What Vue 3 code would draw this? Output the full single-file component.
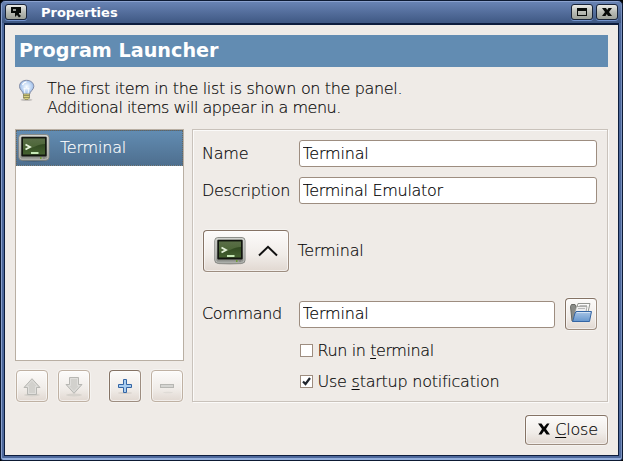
<script setup>
import { ref } from 'vue'

const name = ref('Terminal')
const description = ref('Terminal Emulator')
const command = ref('Terminal')
const runInTerminal = ref(false)
const startupNotification = ref(true)
</script>

<template>
  <svg class="defs" width="0" height="0">
    <defs>
      <linearGradient id="bezel" x1="0" y1="0" x2="0" y2="1">
        <stop offset="0" stop-color="#c9cbc6" /><stop offset=".6" stop-color="#a9aba6" /><stop offset="1" stop-color="#888a85" />
      </linearGradient>
      <linearGradient id="screen" x1="0" y1="0" x2="0" y2="1">
        <stop offset="0" stop-color="#263b18" /><stop offset="1" stop-color="#456231" />
      </linearGradient>
      <linearGradient id="shine" x1="0" y1="0" x2="0" y2="1">
        <stop offset="0" stop-color="#85986f" /><stop offset="1" stop-color="#536f3a" />
      </linearGradient>
      <linearGradient id="folder" x1="0" y1="0" x2="0" y2="1">
        <stop offset="0" stop-color="#a8c5e6" /><stop offset="1" stop-color="#6696cd" />
      </linearGradient>
      <radialGradient id="bulb" cx=".5" cy=".45" r=".55">
        <stop offset="0" stop-color="#f8fcff" /><stop offset=".55" stop-color="#c2d8f4" /><stop offset="1" stop-color="#92b4e4" />
      </radialGradient>
      <symbol id="term" viewBox="0 0 32 28">
        <ellipse cx="16" cy="26.2" rx="13" ry="1.6" fill="#000" opacity=".2" />
        <rect x=".8" y=".6" width="30.2" height="25.6" rx="3" fill="url(#bezel)" stroke="#858782" />
        <rect x="1.8" y="1.6" width="28.2" height="23.6" rx="2" fill="none" stroke="#e0e1dd" stroke-opacity=".6" />
        <rect x="3.3" y="2.8" width="25.4" height="19.7" rx="1" fill="#12160f" />
        <rect x="5" y="4.5" width="22" height="16" fill="url(#screen)" />
        <path d="M5 4.5H27V10C19 10 16 15 5 15.5Z" fill="url(#shine)" opacity=".55" />
        <path d="M7.5 10.500L12 13L7.5 15.500" fill="none" stroke="#e6f3dc" stroke-width="1.8" />
        <path d="M13 19H20.5" stroke="#c6e8b6" stroke-width="2" />
        <path d="M22 24H23.5" stroke="#719c36" stroke-width="2" />
        <path d="M25 24H27" stroke="#777" stroke-width="1" />
      </symbol>
    </defs>
  </svg>
  <div class="window">
    <header class="titlebar">
      <button class="wm">
        <svg width="20" height="14" viewBox="0 0 20 14"><path d="M5 2H15V8H13V9L15 11L13 12.500L11 10L9 12V8H5Z" fill="#070b08" /><path d="M7 5H10" stroke="#b7bab5" stroke-width="1.6" /></svg>
      </button>
      <h1>Properties</h1>
      <button class="wm">
        <svg width="20" height="14" viewBox="0 0 20 14" shape-rendering="crispEdges"><path d="M5 3H15V11H5ZM6 6V10H14V6Z" fill="#080b09" fill-rule="evenodd" /></svg>
      </button>
      <button class="wm last">
        <svg width="20" height="14" viewBox="0 0 20 14"><path d="M5 3H9L10.2 5L11.5 3H15L12 7L15 11H11L9.8 9L8.5 11H5L8 7Z" fill="#080b09" /></svg>
      </button>
    </header>
    <main class="body">
      <h2 class="banner">Program Launcher</h2>
      <section class="hint">
        <svg width="22" height="26" viewBox="0 0 22 26">
          <ellipse cx="11.500" cy="22.8" rx="6" ry="1.3" fill="#000" opacity=".18" />
          <path d="M11.500 3.300C7 3.300 4.500 6.200 4.500 9.500C4.500 12.800 8 14 8.500 17.500H14.500C15 14 18.800 12.800 18.800 9.500C18.800 6.200 16 3.300 11.500 3.300Z" fill="url(#bulb)" stroke="#8089a3" />
          <path d="M10 17L9 11L10.500 12L11.500 10.500L12.500 12L14 11L13 17" fill="none" stroke="#fff" stroke-width=".8" />
          <path d="M7.500 8Q8.500 5.200 11.500 4.800" fill="none" stroke="#fff" stroke-width="1.3" />
          <path d="M8.500 17H14.500V21L13 22.500H10L8.500 21Z" fill="#d9d27c" stroke="#8a8759" stroke-width=".8" />
          <path d="M8.500 18.500H14.500M8.500 20.500H14.500" stroke="#77754f" stroke-width=".7" />
        </svg>
        <p><span class="line1">The first item in the list is shown on the panel.</span><br /><span class="line2">Additional items will appear in a menu.</span></p>
      </section>
      <div class="columns">
        <div class="left">
          <div class="list">
            <div class="item"><svg class="item-icon" width="32" height="28"><use href="#term" /></svg><span>Terminal</span></div>
          </div>
          <div class="tools">
            <button class="btn off"><svg width="32" height="32" viewBox="0 0 32 32"><ellipse cx="16" cy="25" rx="8" ry="1.5" fill="#d6d2cc" /><path d="M16 8.7L24 17.5H20.5V24.5H11.5V17.5H8Z" fill="#d2d1cd" stroke="#b7b7b3" /><path d="M16 10.3L21.5 16.5H19.5V23.5H12.5V16.5H10.3Z" fill="none" stroke="#e0dfdc" /></svg></button>
            <button class="btn off"><svg width="32" height="32" viewBox="0 0 32 32"><ellipse cx="16" cy="25" rx="8" ry="1.5" fill="#d6d2cc" /><path d="M16 23.3L24 14.5H20.5V7.5H11.5V14.5H8Z" fill="#d2d1cd" stroke="#b7b7b3" /><path d="M16 21.7L21.5 15.5H19.5V8.5H12.5V15.5H10.3Z" fill="none" stroke="#e0dfdc" /></svg></button>
            <button class="btn add"><svg width="32" height="32" viewBox="0 0 32 32"><ellipse cx="16" cy="23" rx="7" ry="1" fill="#d8d2cc" /><path d="M14.5 9.5H17.5V14.5H22.5V17.5H17.5V22.5H14.5V17.5H9.5V14.5H14.5Z" fill="#a9cdf0" stroke="#3465a4" /></svg></button>
            <button class="btn off"><svg width="32" height="32" viewBox="0 0 32 32"><ellipse cx="17" cy="22.5" rx="5" ry=".8" fill="#dfdbd6" /><rect x="9.500" y="14.500" width="13" height="3" fill="#d5d5d2" stroke="#b7b7b3" /></svg></button>
          </div>
        </div>
        <div class="form">
          <div class="row"><label>Name</label><input v-model="name" /></div>
          <div class="row second"><label class="l-desc">Description</label><input v-model="description" class="long" /></div>
          <div class="row icon-row">
            <button class="btn icon-btn"><svg width="32" height="28"><use href="#term" /></svg><svg class="chev" width="20" height="12" viewBox="0 0 20 12"><path d="M1 10.500L10 1.800L19 10.500" fill="none" stroke="#111" stroke-width="2" /></svg></button>
            <span class="icon-name">Terminal</span>
          </div>
          <div class="row command"><label class="l-cmd">Command</label><input v-model="command" />
            <button class="btn open"><svg width="32" height="32" viewBox="0 0 32 32">
              <path d="M5.500 8.500L6.500 6.500H10L11 8V23H7Z" fill="#898b87" stroke="#666863" />
              <path d="M11 13L13 5.500H25L23 14Z" fill="#fbfbfa" stroke="#888a85" stroke-width=".9" />
              <path d="M10 14L11.500 8.500H22L21 14" fill="#eee" stroke="#999b96" stroke-width=".8" />
              <path d="M13 10.500H20M14.500 7.500H22" stroke="#aaa" stroke-width=".8" />
              <path d="M11 13.500H26.500L24.500 23.500H7.500C9 21 9 16 11 13.500Z" fill="url(#folder)" stroke="#3465a4" />
              <path d="M11.800 14.500H25.200" stroke="#d0e1f4" />
            </svg></button>
          </div>
          <label class="check first"><i><svg v-if="runInTerminal" width="11" height="11" viewBox="0 0 11 11"><path d="M2 5.500L4.500 8L9 2" fill="none" stroke="#20262e" stroke-width="2.200" /></svg></i><span class="c1">Run in <u>t</u>erminal</span></label>
          <label class="check"><i><svg v-if="startupNotification" width="11" height="11" viewBox="0 0 11 11"><path d="M2 5.500L4.500 8L9 2" fill="none" stroke="#20262e" stroke-width="2.200" /></svg></i><span class="c2">Use <u>s</u>tartup notification</span></label>
        </div>
      </div>
      <footer>
        <button class="btn close"><svg width="12" height="12" viewBox="0 0 12 12"><path d="M0 .5H3.500L6 4L9 .5H11.500L8 6L12 11.500H8.500L6 8L3.500 11.500H.5L4 6Z" fill="#050505" /></svg><span><u>C</u>lose</span></button>
      </footer>
    </main>
  </div>
</template>

<style>
body { margin: 0; background: #000; overflow: hidden; }
</style>

<style scoped>
.defs { position: absolute; }
.window {
  box-sizing: border-box; width: 623px; height: 461px;
  padding: 1px 3px 4px; border: 1px solid #0d1a33;
  border-radius: 5px 5px 3px 3px;
  background: #4d689b; display: flex; flex-direction: column;
  box-shadow: inset 1px 0 #8ba1cc, inset -1px 0 #7a91bf, inset 0 1px #8ba2cf, inset 0 -2px #93aedb;
  font: 200 16px "DejaVu Sans", sans-serif; color: #080808;
  letter-spacing: -.2px; -webkit-text-stroke: .17px currentColor;
}
.titlebar {
  box-sizing: border-box; height: 21px; flex: none; display: flex; align-items: flex-start; padding: 2px 3px 0;
  margin: 0 -2px; background: linear-gradient(#6883b4, #3f5883);
}
.titlebar h1 { margin: 0 auto 0 14px; font: bold 13px/17px "DejaVu Sans", sans-serif; color: #fff; letter-spacing: 0; -webkit-text-stroke: 0; }
.wm {
  box-sizing: border-box; width: 22px; height: 16px; padding: 0; margin: 0; flex: none; display: flex;
  border: 1px solid #182338; border-radius: 3px;
  background: linear-gradient(#e9eae7, #b9bcb5 50%, #9da198);
  box-shadow: 0 1px #7293cd;
}
.wm.last { margin-left: 3px; }
.body {
  flex: none; box-sizing: border-box; width: 615px; height: 433px; background: #efebe7;
  border: 1px solid #0d1d3d; border-top-width: 2px; padding: 10px; display: flex; flex-direction: column;
}
.banner {
  margin: 0; width: 593px; height: 32px; box-sizing: border-box; padding-left: 4px; background: #628cb2;
  color: #fff; font: bold 19.2px/31px "DejaVu Sans", sans-serif; letter-spacing: 0; -webkit-text-stroke: 0;
}
.hint { display: flex; height: 62px; padding-top: 10px; box-sizing: border-box; }
.hint svg { margin-right: 10px; }
.hint p { margin: 2px 0 0; line-height: 19px; white-space: nowrap; }
.line1 { letter-spacing: -.35px; }
.line2 { letter-spacing: -.5px; }
.columns { display: flex; gap: 8px; height: 273px; }
.left { width: 169px; }
.list { box-sizing: border-box; height: 232px; border: 1px solid #b9afa3; background: #fff; }
.item {
  box-sizing: border-box; height: 36px; display: flex; align-items: center; color: #fff;
  background: linear-gradient(#628cb2, #4e6f8f); border: 1px dotted #67665e;
}
.item-icon { margin: 0 10px 0 1px; }
.item span, .icon-name, .l-cmd { padding-bottom: 2px; }
.tools { display: flex; gap: 10px; padding: 9px 1px 0; }
.btn {
  box-sizing: border-box; width: 32px; height: 32px; padding: 0; margin: 0; flex: none;
  display: flex; align-items: center; justify-content: center;
  border: 1px solid #857365; border-color: #857365 #9d8d80 #9d8d80 #857365; border-radius: 4px;
  background: linear-gradient(#fcfbfa, #f0ece8 60%, #e1d8d1);
  box-shadow: inset 0 0 0 1px rgba(255,255,255,.55), 0 0 0 1px rgba(255,255,255,.4);
  font: inherit; color: inherit; letter-spacing: inherit;
}
.btn svg { flex: none; }
.off { border-color: #bfb1a3; }
.add { margin-left: 9px; }
.form {
  box-sizing: border-box; width: 416px; height: 273px; padding: 10px 10px 0 9px;
  border: 1px solid #c9c2bb; box-shadow: inset 1px 1px #fbfaf9, 1px 1px #fbfaf9;
}
.row { display: flex; align-items: center; height: 27px; }
.row label { width: 97px; flex: none; white-space: nowrap; }
.l-desc { letter-spacing: -.27px; }
.l-cmd { letter-spacing: -.35px; }
.row input {
  box-sizing: border-box; flex: 1; min-width: 0; height: 27px; margin: 0; padding: 0 2px 1px 2.5px; outline: 0;
  border: 1px solid #9d8d80; border-radius: 3px; background: #fff; font: inherit; color: #000; letter-spacing: inherit;
}
.row .long { letter-spacing: -.3px; }
.second { margin-top: 10px; }
.icon-row { height: 42px; margin-top: 26px; padding-left: 1px; }
.icon-btn { width: 86px; height: 42px; }
.chev { margin-left: 12px; }
.icon-name { margin-left: 8.5px; }
.command { height: 32px; margin-top: 26px; }
.open { margin-left: 10px; }
.check { display: flex; align-items: center; height: 19px; margin: 0 0 12px 98px; white-space: nowrap; }
.c1 { letter-spacing: -.4px; }
.c2 { letter-spacing: -.24px; }
.first { margin-top: 11px; }
.check i { box-sizing: border-box; width: 13px; height: 13px; border: 1px solid #9d8d80; background: #fff; margin-right: 4.5px; display: flex; }
u { text-underline-offset: 2px; text-decoration-thickness: 1px; }
footer { display: flex; justify-content: flex-end; margin-top: 13px; }
.close { width: 83px; height: 30px; gap: 5px; padding: 0 0 2px 3px; }
</style>
